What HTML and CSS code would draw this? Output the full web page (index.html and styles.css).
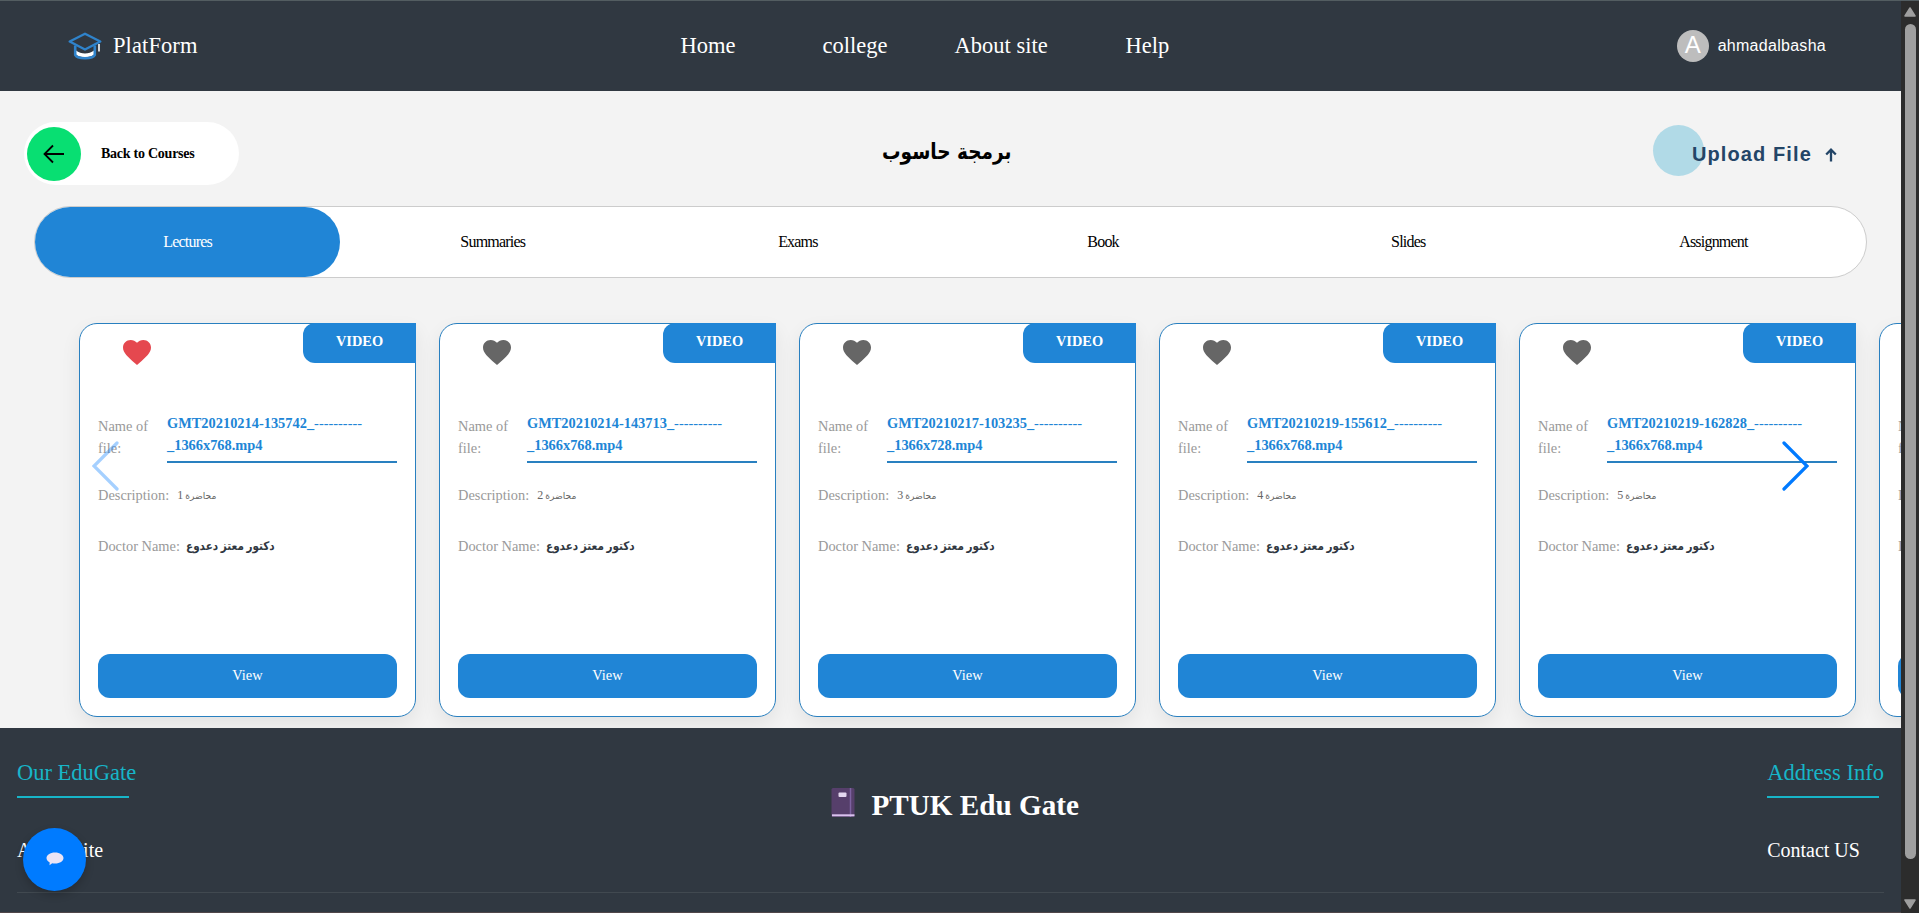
FILE: index.html
```html
<!DOCTYPE html>
<html lang="en">
<head>
<meta charset="utf-8">
<title>PlatForm</title>
<link rel="stylesheet" href="styles.css">
</head>
<body>
<div class="window">
<div class="page">
  <header class="header">
    <a class="brand">
      <svg class="brand-icon" viewBox="0 0 34 28" width="34" height="28">
        <path d="M8 18.500c5 4 13 4 18 0v4c-4 3.500-14 3.500-18 0z" fill="#fff"/>
        <path d="M7.200 13.500v9.500c2 4.300 17.600 4.300 19.600 0v-9.500" fill="none" stroke="#2f83cb" stroke-width="2.600"/>
        <path d="M17 1.800L32.300 9.500 17 17.500 1.700 9.500z" fill="#303841" stroke="#2f83cb" stroke-width="2.400" stroke-linejoin="round"/>
        <path d="M31 12v7.500" stroke="#fff" stroke-width="1.600"/>
      </svg>
      <span>PlatForm</span>
    </a>
    <nav class="nav"><a>Home</a><a>college</a><a>About site</a><a>Help</a></nav>
    <div class="user"><span class="avatar">A</span><span>ahmadalbasha</span></div>
  </header>

  <main class="main">
    <div class="toolbar">
      <div class="back">
        <span class="back-dot"><svg viewBox="0 0 22 20" width="22" height="20"><path d="M10 1.500L1.500 10l8.500 8.500M1.500 10H21" fill="none" stroke="#000" stroke-width="1.800"/></svg></span>
        <span class="back-text">Back to Courses</span>
      </div>
      <h1 class="title">برمجة حاسوب</h1>
      <div class="upload">
        <span class="upload-text">Upload File</span>
        <svg viewBox="0 0 12 14" width="12" height="14"><path d="M6 13.500V2M1.200 6.500L6 1.700l4.800 4.800" fill="none" stroke="#234567" stroke-width="2.300"/></svg>
      </div>
    </div>
    <div class="tabs"><a class="tab active">Lectures</a><a class="tab">Summaries</a><a class="tab">Exams</a><a class="tab">Book</a><a class="tab">Slides</a><a class="tab">Assignment</a></div>
    <div class="slider">
      <div class="track" id="track"></div>
      <svg class="arrow prev" viewBox="0 0 27 50" width="27" height="50"><path d="M25 2L2 25l23 23" fill="none" stroke="#007aff" stroke-width="3.200" stroke-linecap="round"/></svg>
      <svg class="arrow next" viewBox="0 0 27 50" width="27" height="50"><path d="M2 2l23 23L2 48" fill="none" stroke="#007aff" stroke-width="3.200" stroke-linecap="round"/></svg>
    </div>
  </main>

  <footer class="footer">
    <div class="footer-row">
      <div class="col"><h2>Our EduGate</h2><a>About Site</a></div>
      <div class="gate">
        <svg viewBox="0 0 24 30" width="24" height="30"><rect x=".5" y="0" width="23" height="29" rx="1.500" fill="#563f6b"/><path d="M19.500 0v29" stroke="#7d62a0" stroke-width="1.500"/><rect x="7.500" y="4.500" width="8" height="4.500" rx="1" fill="#e3d8ef"/><path d="M1 27.300h22.500" stroke="#d9c2ee" stroke-width="2"/></svg>
        <span>PTUK Edu Gate</span>
      </div>
      <div class="col"><h2>Address Info</h2><a>Contact US</a></div>
    </div>
  </footer>
  <div class="chat"><svg viewBox="0 0 18 14" width="18" height="14"><path d="M9 .5c5 0 8.500 2.500 8.500 5.500S14 11.500 9 11.500c-1 0-2-.1-2.800-.3L3.500 13.300l.2-2.900C1.700 9.400.5 7.800.5 6 .5 3 4 .5 9 .5z" fill="#ebe4f5"/></svg></div>
</div>
<div class="scrollbar">
  <svg width="12" height="10" viewBox="0 0 12 10"><path d="M6 1L11 9H1z" fill="#9f9f9f" stroke="#9f9f9f" stroke-width="1.500" stroke-linejoin="round"/></svg>
  <span class="thumb"></span>
  <svg width="12" height="10" viewBox="0 0 12 10"><path d="M6 9L1 1h10z" fill="#9f9f9f" stroke="#9f9f9f" stroke-width="1.500" stroke-linejoin="round"/></svg>
</div>
</div>
<script src="cards.js"></script>
</body>
</html>
```
FILE: cards.js
```js
const files = [
  ['GMT20210214-135742_', '_1366x768.mp4', 1],
  ['GMT20210214-143713_', '_1366x768.mp4', 2],
  ['GMT20210217-103235_', '_1366x728.mp4', 3],
  ['GMT20210219-155612_', '_1366x768.mp4', 4],
  ['GMT20210219-162828_', '_1366x768.mp4', 5]
];
const card = ([a, b, n], i) => `
<article class="card">
  <span class="badge">VIDEO</span>
  <svg class="heart${i === 0 ? ' liked' : ''}" viewBox="2 3 20 18.350" width="28" height="25" preserveAspectRatio="none"><path d="M12 21.350l-1.450-1.320C5.400 15.360 2 12.280 2 8.500 2 5.420 4.420 3 7.500 3c1.740 0 3.410.81 4.500 2.090C13.090 3.810 14.760 3 16.500 3 19.580 3 22 5.420 22 8.500c0 3.780-3.400 6.860-8.550 11.540L12 21.350z"/></svg>
  <div class="row name"><span class="label">Name of file:</span><b class="file">${a}<span class="dash">----------</span><br>${b}</b></div>
  <div class="row desc"><span class="label">Description:</span><span class="lecture" dir="ltr">${n} <bdi class="ar">محاضرة</bdi></span></div>
  <div class="row doc"><span class="label">Doctor Name:</span><b class="doctor" dir="rtl">دكتور معتز دعدوع</b></div>
  <a class="view">View</a>
</article>`;
// The sixth card only peeks in at the edge of the slider.
const peek = `
<article class="card">
  <div class="row name peek"><span class="label">Name of file:</span></div>
  <div class="row desc"><span class="label">Description:</span></div>
  <div class="row doc"><span class="label">Doctor Name:</span></div>
  <a class="view"></a>
</article>`;
document.getElementById('track').innerHTML = files.map(card).join('') + peek;
```
FILE: styles.css
```css
* { box-sizing: border-box; }
body { margin: 0; font-family: "Liberation Serif", "DejaVu Sans", serif; overflow: hidden; }
.window { display: flex; height: 913px; }
.page { width: 1901px; height: 913px; overflow: hidden; background: #f3f3f3; position: relative; display: flex; flex-direction: column; }
.header { height: 91px; flex: none; background: #303841; border-top: 1px solid #535d61; color: #fff; display: grid; grid-template-columns: 680.500px 1fr auto; align-items: center; padding-right: 75px; font-size: 22.500px; }
.brand { display: flex; align-items: center; gap: 11px; padding-left: 68px; letter-spacing: .1px; }
.nav { display: grid; grid-template-columns: 142px 132px 171px auto; }
.user { display: flex; align-items: center; gap: 9px; font: 16px "Liberation Sans", Arial, sans-serif; letter-spacing: .28px; }
.avatar { width: 32px; height: 32px; border-radius: 50%; background: #bdbdbd; font-size: 24px; letter-spacing: 0; display: flex; align-items: center; justify-content: center; padding-bottom: 2px; }
.main { height: 637px; flex: none; padding-top: 31px; overflow: hidden; }
.toolbar { height: 63px; display: grid; grid-template-columns: 858px 1fr 248px; padding-left: 24px; }
.back { width: 215px; height: 63px; border-radius: 32px; background: #fff; display: flex; align-items: center; padding-left: 3px; gap: 20px; }
.back-dot { width: 54px; height: 54px; border-radius: 50%; background: #08df72; display: flex; align-items: center; justify-content: center; }
.back-text { font-size: 14px; font-weight: 700; letter-spacing: -.25px; }
.title { margin: 0; padding-top: 12px; font: bold 22px/36px "DejaVu Sans", sans-serif; justify-self: start; white-space: nowrap; transform: scaleX(.84); transform-origin: 0 0; }
.upload { position: relative; z-index: 0; display: flex; align-items: center; gap: 13px; padding: 2px 0 0 39px; color: #234567; font: bold 20px "Liberation Sans", Arial, sans-serif; letter-spacing: 1.100px; }
.upload::before { content: ""; position: absolute; z-index: -1; left: 0; top: 3px; width: 51px; height: 51px; border-radius: 50%; background: #b1dae7; }
.tabs { margin: 21px 34px 0; height: 72px; border: 1px solid #ccc; border-radius: 36px; background: #fff; display: grid; grid-template-columns: repeat(6, 1fr); }
.tab { display: flex; align-items: center; justify-content: center; border-radius: 36px; font-size: 16px; letter-spacing: -.8px; color: #000; }
.tab.active { background: #2085d6; color: #fff; }
.slider { position: relative; padding: 45px 0 0 79px; }
.track { display: flex; gap: 23px; }
.card { position: relative; flex: none; width: 337px; height: 394px; border: 1px solid #2980c0; border-radius: 18px 0 18px 18px; background: #fff; box-shadow: 0 8px 20px rgba(0,0,0,.07); padding: 16px 18px 18px; display: flex; flex-direction: column; color: #999; font-size: 14.400px; }
.badge { position: absolute; top: -1px; right: -1px; width: 113px; height: 40px; background: #2085d6; border-radius: 12px 0 0 12px; color: #fff; font-weight: 700; line-height: 37px; text-align: center; }
.heart { margin-left: 25px; flex: none; fill: #666; }
.heart.liked { fill: #e5484f; }
.row { display: flex; }
.name { margin-top: 47px; height: 51px; line-height: 22px; }
.peek { margin-top: 72px; }
.name .label { width: 69px; padding: 3px 15px 0 0; }
.file { width: 230px; border-bottom: 2px solid #2980c0; color: #2085d6; white-space: nowrap; }
.dash { font-weight: 400; }
.desc { margin-top: 20px; height: 24px; line-height: 24px; gap: 8px; }
.lecture { flex: none; font-size: 12px; color: #666; white-space: nowrap; }
.ar { font-size: 9.200px; margin-left: -1px; }
.doc { margin-top: 27px; height: 24px; line-height: 24px; gap: 6px; }
.doctor { color: #303841; font-size: 12px; transform: scaleX(.87); transform-origin: 0 0; white-space: nowrap; }
.view { margin-top: auto; height: 44px; padding-bottom: 2px; border-radius: 12px; background: #2085d6; color: #fff; display: flex; align-items: center; justify-content: center; }
.arrow { position: absolute; top: 163px; }
.prev { left: 92px; opacity: .35; }
.next { left: 1782px; }
.footer { position: relative; flex: 1; background: #303841; color: #fff; padding: 0 17px; border-bottom: 1px solid #50474a; }
.footer-row { height: 165px; border-bottom: 1px solid #414950; display: flex; justify-content: space-between; }
.col { padding-top: 31px; font-size: 20px; }
.col h2 { margin: 0 0 41px; height: 39px; font-size: 22.500px; line-height: 27px; font-weight: 400; color: #17b5c8; background: linear-gradient(#17b5c8, #17b5c8) 0 100% / 112px 2px no-repeat; }
.gate { display: flex; gap: 16px; font-size: 29.200px; font-weight: 700; line-height: 34px; padding: 60px 0 0 7px; }
.chat { position: absolute; left: 23px; top: 828px; width: 63px; height: 63px; border-radius: 50%; background: #007bff; box-shadow: 0 4px 8px rgba(0,0,0,.2); display: flex; align-items: center; justify-content: center; padding-bottom: 2px; }
.scrollbar { width: 18px; background: #2c2c2c; border-top: 1px solid #535d61; display: flex; flex-direction: column; align-items: center; padding: 6px 0 4px; }
.thumb { width: 11px; height: 835px; margin: 7px 0 auto; border-radius: 6px; background: #9f9f9f; }
```
